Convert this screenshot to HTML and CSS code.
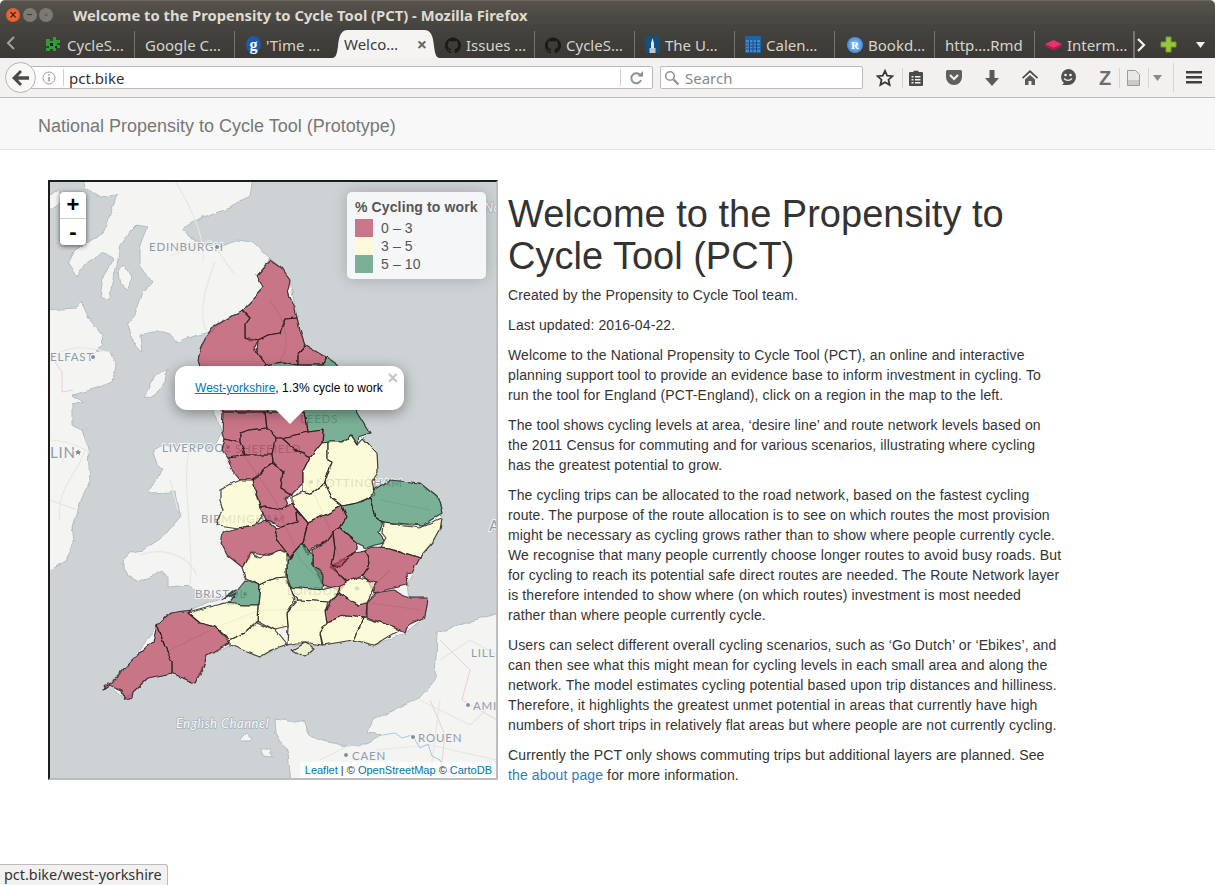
FILE: index.html
```html
<!DOCTYPE html>
<html lang="en">
<head>
  <meta charset="UTF-8">
  <title>Welcome to the Propensity to Cycle Tool (PCT)</title>
  <link rel="stylesheet" href="styles.css">
</head>
<body>
  <header class="titlebar">
    <div class="winbtns">
      <span class="winbtn winbtn-close">×</span>
      <span class="winbtn">–</span>
      <span class="winbtn">▫</span>
    </div>
    <div class="wintitle">Welcome to the Propensity to Cycle Tool (PCT) - Mozilla Firefox</div>
  </header>

  <div class="tabbar">
    <div class="tabscroll">
      <svg width="10" height="14" viewBox="0 0 10 14"><path d="M8 1 2 7l6 6" fill="none" stroke="#a5a29b" stroke-width="2"/></svg>
    </div>
    <div class="tab">
      <svg class="fav" width="17" height="17" viewBox="0 0 17 17"><path d="M1 3h4v2h3V1h3v3h4v3h-3v2h3v3h-4v3H8v-2H5v2H1v-3h3v-2H1z" fill="#2f9e2f"/><path d="M5 7h3v3H5zM10 10h2v2h-2z" fill="#123"/></svg>
      <span>CycleS…</span>
    </div>
    <div class="tab"><span>Google C…</span></div>
    <div class="tab tab-noline">
      <span class="fav fav-g">g</span>
      <span>'Time …</span>
    </div>
    <div class="tab tab-active">
      <span>Welco…</span>
      <span class="tabclose">×</span>
    </div>
    <div class="tab">
      <svg class="fav" width="16" height="16" viewBox="0 0 16 16"><path d="M8 .5a8 8 0 0 0-2.500 15.600c.4 0 .5-.2.5-.4v-1.400c-2.200.5-2.700-1-2.700-1-.4-.9-.9-1.200-.9-1.200-.7-.5.1-.5.1-.5.8.1 1.200.8 1.200.8.700 1.200 1.900.9 2.300.7.100-.5.300-.9.500-1.100-1.800-.2-3.700-.9-3.700-4 0-.9.300-1.600.8-2.100-.1-.2-.4-1 .1-2.100 0 0 .7-.2 2.200.8a7.500 7.500 0 0 1 4 0c1.500-1 2.200-.8 2.200-.8.500 1.100.2 1.900.1 2.100.5.500.8 1.200.8 2.100 0 3.100-1.900 3.800-3.700 4 .3.300.6.800.6 1.500v2.200c0 .2.100.5.600.4A8 8 0 0 0 8 .5z" fill="#1b1a18"/></svg>
      <span>Issues …</span>
    </div>
    <div class="tab">
      <svg class="fav" width="16" height="16" viewBox="0 0 16 16"><path d="M8 .5a8 8 0 0 0-2.500 15.600c.4 0 .5-.2.5-.4v-1.400c-2.200.5-2.700-1-2.700-1-.4-.9-.9-1.200-.9-1.200-.7-.5.1-.5.1-.5.8.1 1.200.8 1.200.8.700 1.200 1.900.9 2.300.7.100-.5.300-.9.500-1.100-1.800-.2-3.700-.9-3.700-4 0-.9.300-1.600.8-2.100-.1-.2-.4-1 .1-2.100 0 0 .7-.2 2.200.8a7.500 7.500 0 0 1 4 0c1.500-1 2.200-.8 2.200-.8.500 1.100.2 1.900.1 2.100.5.500.8 1.200.8 2.100 0 3.100-1.900 3.800-3.700 4 .3.300.6.800.6 1.500v2.200c0 .2.100.5.600.4A8 8 0 0 0 8 .5z" fill="#1b1a18"/></svg>
      <span>CycleS…</span>
    </div>
    <div class="tab">
      <svg class="fav" width="15" height="17" viewBox="0 0 15 17"><path d="M0 0h15v17H0z" fill="#14507e"/><path d="M6 17V7l1.500-5L9 7v10z" fill="#dfe6ea"/><path d="M4.500 17v-5h6v5z" fill="#b9c7d0"/></svg>
      <span>The U…</span>
    </div>
    <div class="tab">
      <svg class="fav" width="16" height="17" viewBox="0 0 16 17"><path d="M0 0h16v17H0z" fill="#1565b0"/><path d="M1 4h14v12H1z" fill="#4b8ac6"/><path d="M1 7h14M1 10h14M1 13h14M4.500 4v12M8 4v12M11.500 4v12" stroke="#134f8b"/></svg>
      <span>Calen…</span>
    </div>
    <div class="tab">
      <span class="fav fav-r">R</span>
      <span>Bookd…</span>
    </div>
    <div class="tab"><span>http….Rmd</span></div>
    <div class="tab">
      <svg class="fav" width="17" height="12" viewBox="0 0 17 12"><path d="M0 5 8.500 1 17 5 8.500 9z" fill="#ed2f72"/><path d="M0 5v2l8.500 4.500V9zM17 5v2l-8.500 4.500V9z" fill="#b11f52"/></svg>
      <span>Interm…</span>
    </div>
    <div class="tabtools">
      <svg width="10" height="14" viewBox="0 0 10 14"><path d="M2 1l6 6-6 6" fill="none" stroke="#f4f2ed" stroke-width="2.200"/></svg>
      <svg class="tabplus" width="17" height="17" viewBox="0 0 17 17"><path d="M6 1h5v5h5v5h-5v5H6v-5H1V6h5z" fill="#9ac53e" stroke="#6f9a2b"/></svg>
      <svg class="tabmenu" width="9" height="6" viewBox="0 0 9 6"><path d="M0 0h9L4.500 6z" fill="#f2f0ea"/></svg>
    </div>
  </div>

  <nav class="navbar">
    <div class="backbtn">
      <svg width="18" height="16" viewBox="0 0 18 16"><path d="M8 0 0 8l8 8 2-2-4-4.300h11V6.300H6L10 2z" fill="#4a4a46"/></svg>
    </div>
    <div class="urlbar">
      <svg width="14" height="14" viewBox="0 0 14 14"><circle cx="7" cy="7" r="6" fill="none" stroke="#9b9b98"/><path d="M6.300 6h1.400v4.500H6.300zM6.300 3.300h1.400v1.500H6.300z" fill="#8f8f8c"/></svg>
      <span class="urlsep"></span>
      <span class="urltext">pct.bike</span>
      <span class="urlsep urlsep-right"></span>
      <svg class="reload" width="14" height="14" viewBox="0 0 14 14"><path d="M12 5.500A5 5 0 1 0 12 9" fill="none" stroke="#8b949b" stroke-width="2"/><path d="M8.500 5.500H14V0z" fill="#8b949b"/></svg>
    </div>
    <div class="searchbar">
      <svg width="16" height="16" viewBox="0 0 16 16"><circle cx="6" cy="6" r="4.300" fill="none" stroke="#8f9396" stroke-width="1.600"/><path d="m9.500 9.500 5 5" stroke="#8f9396" stroke-width="2.400"/></svg>
      <span>Search</span>
    </div>
    <div class="toolicons">
      <svg class="ti-star" width="18" height="18" viewBox="0 0 18 18"><path d="m9 1.800 2.200 4.800 5.200.6-3.900 3.500 1.100 5.200L9 13.300l-4.600 2.600 1.100-5.200-3.900-3.500 5.200-.6z" fill="none" stroke="#383835" stroke-width="1.800"/></svg>
      <span class="tsep"></span>
      <svg class="ti-clip" width="14" height="16" viewBox="0 0 14 16"><path d="M4.500 2V.8h5V2H13a1 1 0 0 1 1 1v12a1 1 0 0 1-1 1H1a1 1 0 0 1-1-1V3a1 1 0 0 1 1-1z" fill="#4a4a46"/><path d="M2.500 6h2v1.500h-2zM2.500 9h2v1.500h-2zM2.500 12h2v1.500h-2zM6 6h5.500v1.500H6zM6 9h5.500v1.500H6zM6 12h5.500v1.500H6z" fill="#f2f1f0"/></svg>
      <svg class="ti-pocket" width="16" height="15" viewBox="0 0 16 15"><path d="M1.500 0h13A1.500 1.500 0 0 1 16 1.500V7a8 8 0 0 1-16 0V1.500A1.500 1.500 0 0 1 1.500 0z" fill="#5f5f5b"/><path d="m4 5 4 4 4-4" fill="none" stroke="#f2f1f0" stroke-width="2.200"/></svg>
      <svg class="ti-down" width="14" height="16" viewBox="0 0 14 16"><path d="M4.500 0h5v8H14l-7 8-7-8h4.500z" fill="#5a5a56"/></svg>
      <svg class="ti-home" width="16" height="15" viewBox="0 0 16 15"><path d="M8 0 0 7.500l1 1.300L8 2.600l7 6.200 1-1.300z" fill="#4a4a46"/><path d="M3 9.500 8 5l5 4.500V15H9.500v-4h-3v4H3z" fill="#5a5a56"/></svg>
      <svg class="ti-smile" width="18" height="17" viewBox="0 0 18 17"><path d="M9 0a8 8 0 0 1 0 16H3l2-2A8 8 0 0 1 9 0z" fill="#4f4f4b"/><circle cx="6.500" cy="6" r="1.300" fill="#f2f1f0"/><circle cx="11.500" cy="6" r="1.300" fill="#f2f1f0"/><path d="M5 9.500c2 2.500 6 2.500 8 0" fill="none" stroke="#f2f1f0" stroke-width="1.300"/></svg>
      <span class="ti-z">Z</span>
      <span class="tsep"></span>
      <svg class="ti-doc" width="13" height="16" viewBox="0 0 13 16"><path d="M.5.500h8l4 4v11H.5z" fill="#e8e8e6" stroke="#9a9a98"/><path d="M1 10h11v5H1z" fill="#c9c9c7"/></svg>
      <span class="tsep"></span>
      <svg class="ti-drop" width="9" height="6" viewBox="0 0 9 6"><path d="M0 0h9L4.500 6z" fill="#8a8a88"/></svg>
      <span class="tsep tsep-tall"></span>
      <svg class="ti-burger" width="16" height="13" viewBox="0 0 16 13"><path d="M0 0h16v2.500H0zM0 5h16v2.500H0zM0 10h16v2.500H0z" fill="#3f3f3c"/></svg>
    </div>
  </nav>

  <div class="appnav">National Propensity to Cycle Tool (Prototype)</div>

  <main class="content">
    <div class="map">
      <svg class="maparea" viewBox="50 182 446 596" width="446" height="596">
        <defs>
          <!-- roughens the hand traced coast and county lines -->
          <filter id="wiggle" filterUnits="userSpaceOnUse" x="40" y="170" width="470" height="620">
            <feTurbulence type="fractalNoise" baseFrequency="0.09" numOctaves="2" seed="4"/>
            <feDisplacementMap in="SourceGraphic" scale="5" xChannelSelector="R" yChannelSelector="G"/>
          </filter>
        </defs>

        <rect class="sea" x="50" y="182" width="446" height="596"/>

        <!-- base land -->
        <g filter="url(#wiggle)">
          <path class="land" d="M123 178 253 178 250 195 230 208 203 218 183 228 190 238 207 245 220 247 237 240 253 242 270 258 258 275 263 288 242 310 223 320 210 332 187 338 177 342 170 334 163 332 153 332 140 335 142 352 133 342 127 325 135 315 143 292 152 282 140 265 140 245 147 227 137 225 130 232 120 245 117 265 112 282 110 298 100 297 103 278 113 258 103 252 87 262 77 277 68 262 75 250 105 232 110 215 117 195 100 197 85 188 83 178Z"/>
          <path class="land" d="M118 272 123 265 132 278 128 290 120 285Z"/>
          <path class="land" d="M44 198 58 190 64 200 52 208 44 208Z"/>
          <path class="land" d="M44 310 77 308 82 300 83 308 90 320 102 335 103 345 95 350 110 352 116 365 112 382 97 388 73 395 83 402 73 405 73 425 81 430 88 450 90 482 81 500 73 527 75 540 66 560 44 575Z"/>
          <path class="land" d="M145 398 155 375 167 370 165 382 155 395Z"/>
          <path class="land" d="M153 452 165 445 190 447 215 448 222 433 205 385 198 360 205 338 225 320 242 310 263 288 257 275 270 258 290 280 297 318 305 345 327 358 337 365 357 412 370 433 363 438 377 453 378 472 373 490 390 480 420 483 437 497 442 513 440 530 420 558 408 585 410 598 428 598 425 617 405 633 375 645 353 640 323 645 305 644 287 645 260 657 230 645 207 655 195 683 172 673 148 678 133 692 125 698 110 685 103 690 133 660 157 625 170 613 192 610 223 597 197 592 190 585 168 587 168 578 162 570 140 582 127 575 122 562 132 552 143 550 163 537 180 517 178 510 175 492 147 493 163 470 157 465Z"/>
          <path class="land" d="M503 610 437 633 435 680 420 697 373 720 367 733 383 735 360 747 340 745 313 737 307 733 306 720 295 722 275 719 276 733 288 753 291 784 503 784Z"/>
          <path class="land" d="M241 739 247 733 252 737 250 741 243 741ZM261 750 270 750 272 757 262 756Z"/>
        </g>

        <!-- roads and borders on the base map -->
        <g class="roads">
          <path d="M176 182C195 215 205 240 203 262M170 256 210 240 235 275M215 262C200 300 200 320 207 332"/>
          <path d="M50 360C70 340 95 350 110 352M50 440C70 440 85 450 90 452M60 520C55 490 80 470 85 450M50 500 78 510"/>
          <path d="M190 447C180 480 195 540 190 585M170 480 178 510M140 555C170 545 190 560 197 575"/>
          <path d="M440 660 470 640 497 655M420 700 470 725 497 700M375 750 430 745 497 760M440 700 430 778"/>
          <path d="M320 760 350 745"/>
        </g>
        <g class="roads roads-dim">
          <path d="M270 300C285 320 292 345 280 360M300 470C320 500 330 530 340 560M240 450 275 500 300 560 330 590M170 650 210 630 260 610 320 610M380 500 430 510M350 600 420 610M390 570 370 590"/>
        </g>
        <path class="border" d="M440 640 470 670 462 700 497 720M430 700 445 735 440 778 497 770M50 355 62 372 62 392 73 390"/>
        <path class="river" d="M383 735 395 733 402 738 412 735 420 748 428 744 432 756 440 760 445 775"/>

        <!-- place labels, under the regions -->
        <g class="labels">
          <text x="149" y="251">EDINBURGH</text>
          <circle cx="217" cy="247" r="2.500"/>
          <text x="50" y="361">ELFAST</text>
          <circle cx="93" cy="357" r="2.500"/>
          <text class="big" x="50" y="458">LIN</text>
          <path d="m78 448 1.500 3h3.300l-2.600 2 1 3.200-3.200-2-3 2 1-3.200-2.700-2h3.300z"/>
          <text x="162" y="452">LIVERPOOL</text>
          <circle cx="228" cy="447" r="2.500"/>
          <text x="235" y="453">SHEFFIELD</text>
          <circle cx="296" cy="450" r="2.500"/>
          <text x="300" y="423">LEEDS</text>
          <circle cx="311" cy="482" r="2.500"/>
          <text x="316" y="487">NOTTINGHAM</text>
          <text x="201" y="523">BIRMINGHAM</text>
          <circle cx="276" cy="519" r="2.500"/>
          <text x="195" y="598">BRISTOL</text>
          <circle cx="245" cy="594" r="2.500"/>
          <text x="287" y="595">LONDON</text>
          <path d="m357 584 1.500 3h3.300l-2.600 2 1 3.200-3.200-2-3 2 1-3.200-2.700-2h3.300z"/>
          <text x="471" y="657">LILLE</text>
          <circle cx="468" cy="705" r="2.500"/>
          <text x="473" y="710">AMIENS</text>
          <circle cx="413" cy="737" r="2.500"/>
          <text x="418" y="742">ROUEN</text>
          <circle cx="346" cy="755" r="2.500"/>
          <text x="352" y="760">CAEN</text>
          <text class="big" x="489" y="531">A</text>
          <text class="sea-label" x="176" y="728">English Channel</text>
          <text class="sea-label" x="484" y="212">No</text>
        </g>

        <!-- regions -->
        <g class="regions" filter="url(#wiggle)">
          <polygon class="r" points="270,260 281,268 290,280 288,290 290,297 295,308 297,318 285,319 282,325 280,333 268,335 258,340 250,340 245,337 245,325 250,318 242,310 252,300 263,288 257,275"/>
          <polygon class="r" points="242,310 250,318 245,325 245,337 258,340 255,347 257,353 265,365 268,412 223,412 205,385 198,360 200,350 205,338 212,328 225,320"/>
          <polygon class="r" points="297,318 300,330 303,340 305,345 298,353 298,365 283,362 265,365 257,353 258,340 268,335 280,333 285,319"/>
          <polygon class="r" points="305,345 317,352 327,358 323,365 298,365 298,353"/>
          <polygon class="g" points="283,362 298,365 323,365 327,358 337,365 345,375 357,412 370,433 358,437 357,445 350,435 342,442 328,442 322,443 323,430 308,432 305,412 268,412 265,365"/>
          <polygon class="r" points="223,412 265,412 267,428 250,430 240,433 240,442 225,438 222,433"/>
          <polygon class="r" points="265,412 305,412 308,432 282,438 275,438 267,428"/>
          <polygon class="r" points="240,433 250,430 267,428 275,438 272,455 245,455 240,442"/>
          <polygon class="r" points="282,438 308,432 323,430 322,443 310,458 295,450"/>
          <polygon class="r" points="225,438 240,442 245,455 227,457 222,450"/>
          <polygon class="r" points="227,457 245,455 272,455 273,463 263,470 253,480 240,480 232,470"/>
          <polygon class="r" points="273,463 263,470 253,480 255,490 260,508 265,507 282,510 288,507 285,500 292,495 280,488 282,472"/>
          <polygon class="r" points="275,438 282,438 295,450 310,458 303,472 303,483 293,493 292,495 280,488 282,472 273,463 272,455"/>
          <polygon class="y" points="310,458 322,443 328,442 328,460 332,462 325,483 310,495 303,492 303,472"/>
          <polygon class="y" points="328,442 342,442 350,435 357,445 363,438 377,453 378,472 372,482 375,495 357,503 342,506 332,498 325,483 332,462 328,460"/>
          <polygon class="y" points="325,483 332,498 342,506 325,515 308,523 297,510 292,503 292,497 303,492 310,495"/>
          <polygon class="y" points="220,490 235,482 240,480 253,480 255,490 260,508 263,513 255,525 238,528 217,525 223,510 220,500"/>
          <polygon class="r" points="260,508 265,507 282,510 292,503 297,510 298,522 282,527 265,520 263,513"/>
          <polygon class="r" points="282,527 298,522 297,510 308,523 303,542 290,557 277,540 275,528"/>
          <polygon class="r" points="223,532 238,528 255,525 265,520 275,528 277,540 290,557 280,550 263,555 252,553 242,567 227,555 221,543"/>
          <polygon class="r" points="308,523 325,515 342,506 347,517 340,528 332,532 325,542 313,548 308,555 303,542"/>
          <polygon class="g" points="342,506 357,503 370,498 375,517 382,522 378,532 385,542 367,548 357,543 340,528 347,517"/>
          <polygon class="g" points="373,490 390,480 420,483 437,497 442,513 423,525 383,522 375,517 370,498"/>
          <polygon class="y" points="383,522 420,527 442,518 440,530 433,543 420,558 390,548 380,547 386,538 382,533"/>
          <polygon class="r" points="366,550 373,547 390,548 420,558 412,572 407,573 408,585 393,588 375,593 370,582 362,575 370,563"/>
          <polygon class="r" points="355,552 366,550 370,563 362,575 347,582 338,573 330,567 347,557"/>
          <polygon class="r" points="333,532 340,528 357,543 355,552 347,557 340,567 332,565 335,550"/>
          <polygon class="r" points="313,550 325,542 333,532 335,550 332,565 338,573 347,582 340,590 323,585 313,567"/>
          <polygon class="g" points="303,542 313,555 313,565 323,575 322,590 293,588 287,582 287,560"/>
          <polygon class="r" points="377,593 393,590 410,598 428,598 425,617 408,625 405,633 387,625 367,617 367,603"/>
          <polygon class="r" points="338,593 358,605 367,602 366,617 347,615 327,622 325,612 330,602"/>
          <polygon class="y" points="340,585 360,577 377,583 367,603 358,605 338,593"/>
          <polygon class="y" points="290,587 322,590 340,585 338,593 330,602 298,600 292,593"/>
          <polygon class="y" points="327,622 347,615 363,617 360,627 353,640 323,645 320,633"/>
          <polygon class="y" points="363,617 387,625 400,630 375,645 353,640 360,627"/>
          <polygon class="y" points="298,600 328,602 325,612 327,622 320,633 322,645 310,643 296,643 287,645 288,627 287,613"/>
          <polygon class="y" points="293,650 305,643 315,648 305,657"/>
          <polygon class="y" points="242,568 250,553 260,558 280,550 287,553 287,577 275,578 260,585 245,578"/>
          <polygon class="g" points="222,600 237,590 245,580 260,585 258,605 243,605 227,605 237,593"/>
          <polygon class="y" points="260,585 275,578 287,577 295,600 287,613 288,627 275,630 257,620 258,605"/>
          <polygon class="y" points="188,613 225,603 243,605 258,605 257,623 245,633 230,640 215,627 200,623"/>
          <polygon class="y" points="230,640 245,633 257,622 275,630 287,645 272,650 260,657 247,652 230,645"/>
          <polygon class="r" points="170,613 192,610 188,613 200,623 215,627 230,642 207,655 202,670 195,683 187,680 172,673 172,662 165,647 160,633 157,625"/>
          <polygon class="r" points="157,625 160,633 165,647 172,662 172,673 148,678 133,692 132,698 125,700 122,690 110,685 103,690 105,685 112,683 133,660 153,642"/>
        </g>
      </svg>

      <div class="zoomctl">
        <a class="zoombtn">+</a>
        <a class="zoombtn">-</a>
      </div>

      <div class="legend">
        <div class="legend-title">% Cycling to work</div>
        <div class="legend-row"><i class="sw sw-r"></i>0 – 3</div>
        <div class="legend-row"><i class="sw sw-y"></i>3 – 5</div>
        <div class="legend-row"><i class="sw sw-g"></i>5 – 10</div>
      </div>

      <div class="popup">
        <span class="popup-close">×</span>
        <a href="#">West-yorkshire</a>, 1.3% cycle to work
        <div class="popup-tip"></div>
      </div>

      <div class="attrib"><a href="#">Leaflet</a> | © <a href="#">OpenStreetMap</a> © <a href="#">CartoDB</a></div>
    </div>

    <article class="intro">
      <h1>Welcome to the Propensity to Cycle Tool (PCT)</h1>
      <p>Created by the Propensity to Cycle Tool team.</p>
      <p>Last updated: 2016-04-22.</p>
      <p>Welcome to the National Propensity to Cycle Tool (PCT), an online and interactive planning support tool to provide an evidence base to inform investment in cycling. To run the tool for England (PCT-England), click on a region in the map to the left.</p>
      <p>The tool shows cycling levels at area, ‘desire line’ and route network levels based on the 2011 Census for commuting and for various scenarios, illustrating where cycling has the greatest potential to grow.</p>
      <p>The cycling trips can be allocated to the road network, based on the fastest cycling route. The purpose of the route allocation is to see on which routes the most provision might be necessary as cycling grows rather than to show where people currently cycle. We recognise that many people currently choose longer routes to avoid busy roads. But for cycling to reach its potential safe direct routes are needed. The Route Network layer is therefore intended to show where (on which routes) investment is most needed rather than where people currently cycle.</p>
      <p>Users can select different overall cycling scenarios, such as ‘Go Dutch’ or ‘Ebikes’, and can then see what this might mean for cycling levels in each small area and along the network. The model estimates cycling potential based upon trip distances and hilliness. Therefore, it highlights the greatest unmet potential in areas that currently have high numbers of short trips in relatively flat areas but where people are not currently cycling.</p>
      <p>Currently the PCT only shows commuting trips but additional layers are planned. See <a href="#">the about page</a> for more information.</p>
    </article>
  </main>

  <div class="statusbar">pct.bike/west-yorkshire</div>
</body>
</html>
```

FILE: styles.css
```css
html, body {
  height: 100%;
}

body {
  margin: 0;
  overflow: hidden;
  background-color: white;
  font-family: "Liberation Sans", Arial, sans-serif;
  font-size: 14px;
  line-height: 20px;
  color: #333;
}

/* browser window */

.titlebar {
  display: flex;
  align-items: center;
  height: 28px;
  background: linear-gradient(#56534d, #45433e);
  border-top: 1px solid #6b6862;
  box-sizing: border-box;
  border-radius: 5px 5px 0 0;
}

.winbtns {
  display: flex;
  gap: 2.500px;
  width: 73px;
  padding-left: 6px;
  box-sizing: border-box;
}

.winbtn {
  display: flex;
  align-items: center;
  justify-content: center;
  width: 14px;
  height: 14px;
  border-radius: 50%;
  background: #7c7a74;
  color: #3c3b37;
  font-size: 10px;
  line-height: 1;
  font-weight: bold;
}

.winbtn-close {
  background: radial-gradient(#f0794e, #d9501f);
  color: #5c1c08;
  font-size: 12px;
}

.wintitle {
  font-family: "Noto Sans", sans-serif;
  font-weight: bold;
  font-size: 14.750px;
  color: #dfdbd2;
}

.tabbar {
  display: flex;
  align-items: stretch;
  height: 30px;
  background: linear-gradient(#45433e, #3a3935);
  font-family: "Noto Sans", sans-serif;
  font-size: 15px;
  color: #d7d4cb;
}

.tabscroll {
  display: flex;
  align-items: center;
  width: 35px;
  padding-left: 6px;
  box-sizing: border-box;
}

.tab {
  display: flex;
  align-items: center;
  gap: 5px;
  width: 100px;
  padding-left: 10px;
  box-sizing: border-box;
  white-space: nowrap;
  border-right: 1px solid #77756f;
  margin: 3px 0 0;
}

.tab-noline {
  border-right: 0;
}

.fav {
  flex: none;
}

.fav-g {
  display: flex;
  align-items: center;
  justify-content: center;
  width: 15px;
  height: 17px;
  border-radius: 50%;
  background: #1d5ba8;
  color: white;
  font-family: "Liberation Serif", serif;
  font-weight: bold;
  font-size: 16px;
  margin-left: 1px;
}

.fav-r {
  display: flex;
  align-items: center;
  justify-content: center;
  width: 16px;
  height: 16px;
  border-radius: 50%;
  background: radial-gradient(#9fd0fb, #1b6fd8);
  color: white;
  font-family: "Liberation Serif", serif;
  font-weight: bold;
  font-size: 11px;
  margin-left: 2px;
}

.tab-active {
  justify-content: space-between;
  width: 108px;
  height: 28px;
  padding: 0 13px 0 12px;
  margin: 2px -5px 0 -3px;
  background: #f5f4f3;
  color: #3c3b37;
  border-right: 0;
  clip-path: path('M0 28C4 28 5 24 6 16 7 6 9 0 16 0H92C99 0 101 6 102 16 103 24 104 28 108 28Z');
}

.tabclose {
  font-size: 18px;
  font-weight: bold;
  color: #666;
}

.tabtools {
  display: flex;
  align-items: center;
  flex: 1;
  border-left: 1px solid #77756f;
  margin: 3px 0 0 -2px;
}

.tabtools svg:first-child {
  margin-left: 2px;
}

.tabplus {
  margin-left: 14px;
}

.tabmenu {
  margin-left: 19px;
}

.navbar {
  display: flex;
  align-items: center;
  height: 40px;
  padding-left: 5px;
  box-sizing: border-box;
  background: #f2f1f0;
  border-bottom: 1px solid #bdbcb9;
  font-family: "Noto Sans", sans-serif;
  font-size: 15px;
}

.backbtn {
  display: flex;
  align-items: center;
  justify-content: center;
  width: 29px;
  height: 29px;
  border: 1px solid #b5b4b1;
  border-radius: 50%;
  background: #f8f8f7;
  flex: none;
  z-index: 1;
}

.urlbar {
  display: flex;
  align-items: center;
  width: 622px;
  height: 23px;
  margin-left: -5px;
  padding: 0 9px 0 10px;
  box-sizing: border-box;
  background: white;
  border: 1px solid #bbb;
  border-radius: 0 2px 2px 0;
  color: #333;
}

.urlsep {
  width: 1px;
  height: 17px;
  margin: 0 5px 0 7px;
  background: #cfcfcf;
}

.urltext {
  flex: 1;
}

.urlsep-right {
  margin: 0 8px 0 0;
}

.searchbar {
  display: flex;
  align-items: center;
  gap: 5px;
  width: 203px;
  height: 23px;
  margin-left: 7px;
  padding-left: 3px;
  box-sizing: border-box;
  background: white;
  border: 1px solid #bbb;
  border-radius: 2px;
  color: #888;
}

.toolicons {
  display: flex;
  align-items: center;
  height: 100%;
}

.ti-star { margin-left: 13px; }
.tsep { width: 1px; height: 20px; background: #d5d4d2; margin-left: 8px; }
.ti-clip { margin-left: 6px; }
.ti-pocket { margin-left: 23px; }
.ti-down { margin-left: 23px; }
.ti-home { margin-left: 23px; }
.ti-smile { margin-left: 21px; }
.ti-z {
  margin-left: 22px;
  font-family: "Liberation Sans", sans-serif;
  font-weight: bold;
  font-size: 20px;
  color: #6d6d6b;
}
.ti-doc { margin-left: 7px; }
.ti-drop { margin-left: 4px; }
.tsep-tall { height: 29px; margin-left: 11px; }
.ti-burger { margin-left: 12px; }

/* page */

.appnav {
  height: 52px;
  padding-left: 38px;
  box-sizing: border-box;
  background-color: #f8f8f8;
  border-bottom: 1px solid #e7e7e7;
  font-size: 18px;
  line-height: 57px;
  color: #777;
}

.content {
  display: flex;
  gap: 10px;
  padding: 30px 0 0 48px;
}

.map {
  position: relative;
  flex: none;
  width: 446px;
  height: 596px;
  border: 2px solid;
  border-color: #1c1c1c #bdbdbd #bdbdbd #1c1c1c;
  overflow: hidden;
  font-size: 12px;
}

.maparea {
  display: block;
}

.sea { fill: #cdd2d5; }
.land { fill: #f4f4f2; stroke: #b4bcbf; stroke-width: 1; }

.roads {
  fill: none;
  stroke: #e6e6e3;
  stroke-width: 1.200;
}

.roads-dim {
  stroke: #cfcfca;
}

.border {
  fill: none;
  stroke: #eccfd0;
  stroke-width: 1;
}

.river {
  fill: none;
  stroke: #a9c7e0;
  stroke-width: 1;
}

.labels text {
  font-family: Lato, sans-serif;
  font-size: 11.500px;
  letter-spacing: 0.800px;
  fill: #8f9cab;
  stroke: #f4f4f2;
  stroke-width: 2px;
  paint-order: stroke;
}

.labels .big {
  font-size: 15px;
}

.labels .sea-label {
  font-style: italic;
  font-size: 13px;
  letter-spacing: 0.500px;
  fill: #f7f7f7;
  stroke: #a9b2b9;
  stroke-width: 1.500px;
}

.labels circle,
.labels path {
  fill: #7d8b9b;
  stroke: white;
  stroke-width: 1;
}

.regions polygon {
  stroke: #1f1a1c;
  stroke-opacity: 0.8;
  stroke-width: 1.200;
  stroke-linejoin: round;
  fill-opacity: 0.7;
}

.r { fill: #b73f5d; }
.y { fill: #fefdcc; }
.g { fill: #47936e; }

.zoomctl {
  position: absolute;
  left: 10px;
  top: 10px;
  width: 26px;
  background: white;
  border-radius: 4px;
  box-shadow: 0 1px 5px rgba(0, 0, 0, 0.65);
}

.zoombtn {
  display: block;
  height: 26px;
  text-align: center;
  font-size: 22px;
  font-weight: bold;
  line-height: 26px;
  color: black;
}

.zoombtn:first-child {
  border-bottom: 1px solid #ccc;
}

.legend {
  position: absolute;
  left: 297px;
  top: 10px;
  width: 139px;
  height: 87px;
  padding: 6px 8px;
  box-sizing: border-box;
  background: rgba(255, 255, 255, 0.8);
  border-radius: 5px;
  box-shadow: 0 0 15px rgba(0, 0, 0, 0.2);
  font-size: 14px;
  line-height: 18px;
  letter-spacing: 0.120px;
  color: #555;
}

.legend-title {
  font-weight: bold;
  margin-bottom: 3px;
  white-space: nowrap;
}

.legend-row {
  display: flex;
  align-items: center;
  height: 18px;
}

.sw {
  width: 18px;
  height: 18px;
  margin-right: 8px;
}

.sw-r { background: #c9758a; }
.sw-y { background: #fbfbd9; }
.sw-g { background: #7bb096; }

.popup {
  position: absolute;
  left: 125px;
  top: 184px;
  width: 229px;
  height: 44px;
  padding: 12px 0 0 20px;
  box-sizing: border-box;
  background: white;
  border-radius: 12px;
  box-shadow: 0 3px 14px rgba(0, 0, 0, 0.4);
  font-size: 12px;
  line-height: 20px;
  letter-spacing: 0.040px;
  color: black;
  white-space: nowrap;
}

.popup a {
  color: #0078a8;
}

.popup-close {
  position: absolute;
  right: 6px;
  top: 3px;
  font-size: 18px;
  font-weight: bold;
  line-height: 18px;
  color: #c3c3c3;
}

.popup-tip {
  position: absolute;
  left: 101px;
  top: 44px;
  width: 0;
  height: 0;
  border-left: 14px solid transparent;
  border-right: 14px solid transparent;
  border-top: 14px solid white;
}

.attrib {
  position: absolute;
  right: 0;
  bottom: 0;
  padding: 0 4px 0 5px;
  background: rgba(255, 255, 255, 0.7);
  font-size: 11px;
  line-height: 16px;
  color: #333;
  white-space: nowrap;
}

.attrib a {
  color: #0078a8;
  text-decoration: none;
}

.intro {
  width: 554px;
  letter-spacing: 0.120px;
}

h1 {
  margin: 13px 0 8px;
  font-size: 38px;
  font-weight: 500;
  line-height: 42px;
  letter-spacing: 0;
  color: #333;
}

p {
  margin: 0 0 10px;
}

.intro a {
  color: #337ab7;
  text-decoration: none;
}

.statusbar {
  position: absolute;
  left: 0;
  bottom: 0;
  width: 168px;
  height: 21px;
  padding-left: 4px;
  box-sizing: border-box;
  background: #f2f1f0;
  border: 1px solid #bdbcb9;
  border-left: 0;
  border-bottom: 0;
  border-radius: 0 3px 0 0;
  font-family: "Noto Sans", sans-serif;
  font-size: 14.400px;
  line-height: 20px;
  color: #333;
  white-space: nowrap;
}
```
